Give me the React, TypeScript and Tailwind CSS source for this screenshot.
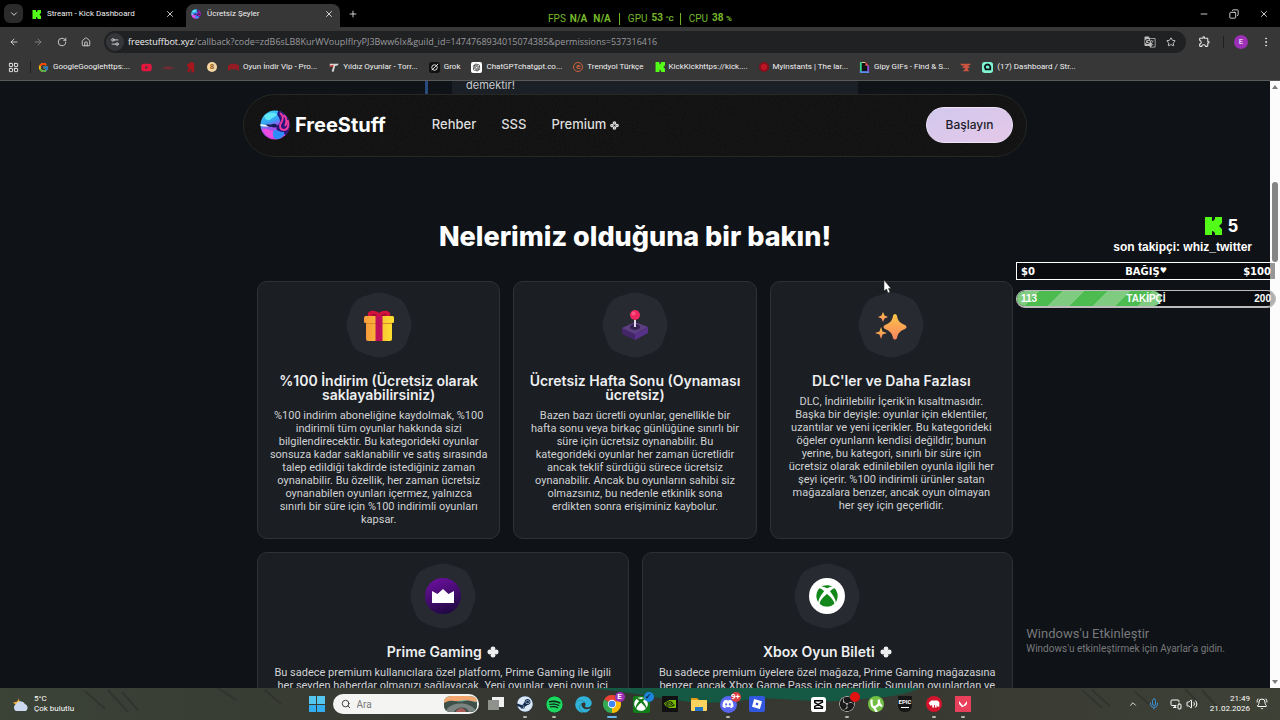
import type { ReactNode } from 'react'
import {
  ArrowLeft,
  ArrowRight,
  BellRing,
  ChevronDown,
  ChevronUp,
  Copy,
  EllipsisVertical,
  House,
  LayoutGrid,
  Mic,
  Minus,
  MonitorSmartphone,
  Plus,
  RotateCw,
  Search,
  Settings2,
  Star,
  Volume2,
  X,
} from 'lucide-react'
import { FaDiscord, FaEdge, FaSpotify, FaSteam, FaXbox, FaYoutube } from 'react-icons/fa'
import { FcGoogle } from 'react-icons/fc'
import { MdGTranslate, MdOutlineExtension } from 'react-icons/md'
import { RiOpenaiFill } from 'react-icons/ri'
import { SiNvidia, SiObsstudio, SiRoblox } from 'react-icons/si'

const site = "font-[Inter,'Open_Sans',sans-serif]"
const body = "font-[Roboto,'Open_Sans',sans-serif]"
const system = "font-[Roboto,'Noto_Sans',sans-serif]"
const arial = "font-['Liberation_Sans',Arial,sans-serif]"

function KickIcon({ className }: { className?: string }) {
  return (
    <svg viewBox="0 0 18 18" className={className} aria-hidden="true">
      <path
        fill="#53fc18"
        d="M1 0h7v4h1l2-2V0h7v6l-3 3 3 3v6h-7v-2l-2-2H8v4H1z"
      />
    </svg>
  )
}

function FreeStuffLogo({ className }: { className?: string }) {
  return (
    <svg viewBox="0 0 30 30" className={className} aria-hidden="true">
      <defs>
        <clipPath id="orb">
          <circle cx="15" cy="15" r="14.5" />
        </clipPath>
        <linearGradient id="orb-fill" x1="0" y1="0" x2="0.4" y2="1">
          <stop offset="0" stopColor="#3fe0f7" />
          <stop offset="0.45" stopColor="#35a3f5" />
          <stop offset="0.6" stopColor="#8d5cf0" />
          <stop offset="1" stopColor="#e23be0" />
        </linearGradient>
      </defs>
      <g clipPath="url(#orb)">
        <rect width="30" height="30" fill="url(#orb-fill)" />
        <path d="M4 6c4-4 9-4 13-2-1 3-4 3-6 5s-5 2-7-3z" fill="#62e9f7" />
        <path d="M18 0h8l4 7v14l-4 5c-2-3-5-4-8-5-3-2-1-5 1-7s1-5-1-8 1-4 0-6z" fill="#25157c" />
        <path
          d="M20 3c4 3 3 7 1 10s-1 7 3 7 5-5 4-10M24 5c3 3 3 8 1 11"
          fill="none"
          stroke="#ee3a9d"
          strokeWidth="2"
        />
        <path d="M5 15c3-1 6 0 8-1s4 1 5 2-4 2-6 1-4 1-7-1z" fill="#141c56" />
        <path d="M0 14l6 1 3 2-9-1z" fill="#f2faff" />
        <path d="M2 19c6-1 7 2 11 2s4 5 1 6-9-1-12-8z" fill="#ef4cdf" />
        <path d="M14 20c4 0 6 2 9 2s1 5-4 7-8-5-5-9z" fill="#2f8bf6" />
      </g>
    </svg>
  )
}

function Clover({ className }: { className?: string }) {
  return (
    <svg viewBox="0 0 12 12" className={className} fill="currentColor" aria-hidden="true">
      <circle cx="6" cy="2.8" r="2.4" />
      <circle cx="6" cy="9.2" r="2.4" />
      <circle cx="2.8" cy="6" r="2.4" />
      <circle cx="9.2" cy="6" r="2.4" />
      <rect x="4.5" y="4.5" width="3" height="3" />
    </svg>
  )
}

function OpenClover({ className }: { className?: string }) {
  return (
    <svg viewBox="0 0 12 12" className={className} fill="none" stroke="currentColor" strokeWidth="1.8" aria-hidden="true">
      <circle cx="6" cy="2.6" r="1.500" />
      <circle cx="6" cy="9.4" r="1.500" />
      <circle cx="2.6" cy="6" r="1.500" />
      <circle cx="9.4" cy="6" r="1.500" />
    </svg>
  )
}

function GiftIcon() {
  return (
    <svg viewBox="0 0 32 34" className="h-[34px] w-8" aria-hidden="true">
      <defs>
        <linearGradient id="gift" x1="0" x2="1">
          <stop offset="0" stopColor="#f79a3c" />
          <stop offset="1" stopColor="#fde02f" />
        </linearGradient>
      </defs>
      <path d="M5 8c-2-5 6-7 11-3 5-4 13-2 11 3z" fill="#d1123c" />
      <path d="M8 7c2-2 5-1 6 1zm16 0c-2-2-5-1-6 1z" fill="#8f0b2e" />
      <rect x="3" y="13" width="26" height="20" rx="2" fill="url(#gift)" />
      <rect x="1" y="8" width="30" height="7" rx="1.5" fill="url(#gift)" />
      <path d="M3 15h26v1H3z" fill="#d98a2c" />
      <rect x="12.500" y="8" width="7" height="25" fill="#c0105c" />
    </svg>
  )
}

function JoystickIcon() {
  return (
    <svg viewBox="0 0 32 34" className="h-[34px] w-8" aria-hidden="true">
      <path d="M3 20l13-6 13 5v6l-13 7-13-6z" fill="#432668" />
      <path d="M3 20l13-6 13 5-13 7z" fill="#5c3f7e" />
      <path d="M16 26l13-7v6l-13 7z" fill="#573087" />
      <ellipse cx="16" cy="19" rx="5" ry="3" fill="#33214f" />
      <rect x="15" y="12" width="2" height="7" fill="#e5d8ee" />
      <circle cx="16" cy="7" r="5" fill="#f0285f" />
      <circle cx="14.500" cy="5.500" r="2" fill="#fb5480" />
    </svg>
  )
}

function SparklesIcon() {
  return (
    <svg viewBox="0 0 32 34" className="h-[34px] w-8" aria-hidden="true">
      <defs>
        <linearGradient id="spark" x1="0" y1="0" x2="0" y2="1">
          <stop offset="0" stopColor="#fbc646" />
          <stop offset="1" stopColor="#f98461" />
        </linearGradient>
      </defs>
      <g fill="url(#spark)">
        <path d="M20 6c1 0 2 1 2 2 1 5 3 7 8 9 2 1 2 3 0 4-5 2-7 4-8 9-1 2-3 2-4 0-1-5-3-7-8-9-2-1-2-3 0-4 5-2 7-4 8-9 0-1 1-2 2-2z" />
        <path d="M8 4l1.500 3.500L13 9l-3.500 1.500L8 14l-1.500-3.500L3 9l3.500-1.500z" />
        <path d="M6 19l1.500 4.500L12 25l-4.500 1.500L6 31l-1.500-4.500L0 25l4.500-1.500z" />
      </g>
    </svg>
  )
}

function CrownIcon() {
  return (
    <svg viewBox="0 0 36 36" className="size-9" aria-hidden="true">
      <defs>
        <linearGradient id="crown" x1="0.3" y1="0" x2="0.7" y2="1">
          <stop offset="0" stopColor="#6a0f9c" />
          <stop offset="1" stopColor="#1d0840" />
        </linearGradient>
      </defs>
      <circle cx="18" cy="18" r="18" fill="url(#crown)" />
      <path d="M7 13l5.500 3L18 11l5.500 5 5.500-3v12H7z" fill="#fff" />
    </svg>
  )
}

function XboxIcon() {
  return (
    <span className="flex size-9 items-center justify-center rounded-full bg-white">
      <FaXbox className="size-[22px] text-[#13881a]" />
    </span>
  )
}

function Blob({ children }: { children: ReactNode }) {
  return (
    <div className="relative flex size-[66px] items-center justify-center">
      <svg viewBox="0 0 66 66" className="absolute inset-0 size-full" aria-hidden="true">
        <path
          d="M33 21l9 3 3 9-3 9-9 3-9-3-3-9 3-9z"
          fill="#272a30"
          stroke="#272a30"
          strokeWidth="41"
          strokeLinejoin="round"
        />
      </svg>
      <span className="relative">{children}</span>
    </div>
  )
}

type Feature = { icon: ReactNode; title: string[]; text: string[]; premium?: boolean }

const features: Feature[] = [
  {
    icon: <GiftIcon />,
    title: ['%100 İndirim (Ücretsiz olarak', 'saklayabilirsiniz)'],
    text: [
      '%100 indirim aboneliğine kaydolmak, %100',
      'indirimli tüm oyunlar hakkında sizi',
      'bilgilendirecektir. Bu kategorideki oyunlar',
      'sonsuza kadar saklanabilir ve satış sırasında',
      'talep edildiği takdirde istediğiniz zaman',
      'oynanabilir. Bu özellik, her zaman ücretsiz',
      'oynanabilen oyunları içermez, yalnızca',
      'sınırlı bir süre için %100 indirimli oyunları',
      'kapsar.',
    ],
  },
  {
    icon: <JoystickIcon />,
    title: ['Ücretsiz Hafta Sonu (Oynaması', 'ücretsiz)'],
    text: [
      'Bazen bazı ücretli oyunlar, genellikle bir',
      'hafta sonu veya birkaç günlüğüne sınırlı bir',
      'süre için ücretsiz oynanabilir. Bu',
      'kategorideki oyunlar her zaman ücretlidir',
      'ancak teklif sürdüğü sürece ücretsiz',
      'oynanabilir. Ancak bu oyunların sahibi siz',
      'olmazsınız, bu nedenle etkinlik sona',
      'erdikten sonra erişiminiz kaybolur.',
    ],
  },
  {
    icon: <SparklesIcon />,
    title: ["DLC'ler ve Daha Fazlası"],
    text: [
      "DLC, İndirilebilir İçerik'in kısaltmasıdır.",
      'Başka bir deyişle: oyunlar için eklentiler,',
      'uzantılar ve yeni içerikler. Bu kategorideki',
      'öğeler oyunların kendisi değildir; bunun',
      'yerine, bu kategori, sınırlı bir süre için',
      'ücretsiz olarak edinilebilen oyunla ilgili her',
      'şeyi içerir. %100 indirimli ürünler satan',
      'mağazalara benzer, ancak oyun olmayan',
      'her şey için geçerlidir.',
    ],
  },
]

const premiumFeatures: Feature[] = [
  {
    icon: <CrownIcon />,
    title: ['Prime Gaming'],
    premium: true,
    text: [
      'Bu sadece premium kullanıcılara özel platform, Prime Gaming ile ilgili',
      'her şeyden haberdar olmanızı sağlayacak. Yeni oyunlar, yeni oyun içi',
    ],
  },
  {
    icon: <XboxIcon />,
    title: ['Xbox Oyun Bileti'],
    premium: true,
    text: [
      'Bu sadece premium üyelere özel mağaza, Prime Gaming mağazasına',
      'benzer, ancak Xbox Game Pass için geçerlidir. Sunulan oyunlardan ve',
    ],
  },
]

function FeatureCard({ icon, title, text, premium }: Feature) {
  return (
    <article className="flex flex-col items-center rounded-[10px] border border-[#2e3236] bg-[#1b1e23] pt-2.5 pb-3 text-center">
      <Blob>{icon}</Blob>
      <h3 className="mt-4 text-sm leading-[14px] font-semibold whitespace-nowrap text-[#eeeff0]">
        {title.map((line) => (
          <span key={line} className="flex items-center justify-center gap-[5px]">
            {line}
            {premium && <Clover className="size-3" />}
          </span>
        ))}
      </h3>
      <p className={`mt-[7px] text-[11px] leading-[13px] whitespace-nowrap text-[#d0d2d4] ${body}`}>
        {text.map((line) => (
          <span key={line} className="block">
            {line}
          </span>
        ))}
      </p>
    </article>
  )
}

function TabStrip() {
  return (
    <div className="relative flex h-[27px] shrink-0 items-end bg-black text-[8px] text-[#f0f0f0]">
      <button aria-label="Sekme ara" className="mb-1 ml-1 flex size-[19px] items-center justify-center rounded-md bg-[#2b2b2b]">
        <ChevronDown className="size-2.5" />
      </button>
      <div className="ml-[9px] flex h-[25px] w-[143px] items-center pb-px">
        <KickIcon className="mr-1.5 size-[9px]" />
        <span className="flex-1">Stream - Kick Dashboard</span>
        <button aria-label="Sekmeyi kapat">
          <X className="size-2.5" />
        </button>
      </div>
      <div className="ml-[11px] flex h-[23px] w-[154px] items-center rounded-t-lg bg-[#373737] pr-1.5 pb-[3px] pl-[5px]">
        <FreeStuffLogo className="mr-1.5 size-2.5" />
        <span className="flex-1">Ücretsiz Şeyler</span>
        <button aria-label="Sekmeyi kapat">
          <X className="size-2.5" />
        </button>
      </div>
      <button aria-label="Yeni sekme" className="mb-2 ml-2">
        <Plus className="size-2.5" />
      </button>
      <div className="mr-[11px] mb-2 ml-auto flex gap-5">
        <button aria-label="Simge durumuna küçült">
          <Minus className="size-2.5" />
        </button>
        <button aria-label="Önceki boyut">
          <Copy className="size-2.5 -scale-x-100" />
        </button>
        <button aria-label="Kapat">
          <X className="size-2.5" />
        </button>
      </div>
      <div className="absolute top-[11px] left-1/2 flex -translate-x-1/2 items-center gap-1 text-[10px] leading-[14px] whitespace-nowrap text-[#76b82a]">
        <span>FPS</span>
        <b>N/A</b>
        <b className="ml-0.5">N/A</b>
        <span className="ml-1 h-3 w-px bg-[#76b82a]" />
        <span className="ml-1">GPU</span>
        <b>
          53 <span className="text-[8px]">°C</span>
        </b>
        <span className="ml-0.5 h-3 w-px bg-[#76b82a]" />
        <span className="ml-1">CPU</span>
        <b>
          38 <span className="text-[8px]">%</span>
        </b>
      </div>
    </div>
  )
}

function Toolbar() {
  return (
    <div className="flex h-[29px] shrink-0 items-center bg-[#373737] text-[#e3e3e3]">
      <div className="ml-[9px] flex gap-3.5">
        <button aria-label="Geri">
          <ArrowLeft className="size-2.5" />
        </button>
        <button aria-label="İleri" className="text-[#8b8b8b]">
          <ArrowRight className="size-2.5" />
        </button>
        <button aria-label="Yenile">
          <RotateCw className="size-2.5" />
        </button>
        <button aria-label="Ana sayfa">
          <House className="size-2.5" />
        </button>
      </div>
      <div className="ml-[13px] flex h-[22px] flex-1 items-center rounded-full bg-[#202123] pr-2.5 pl-0.5">
        <button aria-label="Site bilgileri" className="mr-1 flex size-[18px] items-center justify-center rounded-full bg-[#35363a]">
          <Settings2 className="size-2.5" />
        </button>
        <p className="flex-1 font-['Open_Sans','Noto_Sans',sans-serif] text-[9px] whitespace-nowrap text-[#9a9b9e]">
          <span className="text-[#f1f1f1]">freestuffbot.xyz</span>
          /callback?code=zdB6sLB8KurWVoupIfIryPJ3Bww6Ix&amp;guild_id=1474768934015074385&amp;permissions=537316416
        </p>
        <button aria-label="Bu sayfayı çevir" className="mr-2.5">
          <MdGTranslate className="size-3 text-[#bdbdbd]" />
        </button>
        <button aria-label="Yer işareti ekle">
          <Star className="size-2.5" />
        </button>
      </div>
      <button aria-label="Uzantılar" className="ml-3">
        <MdOutlineExtension className="size-[13px]" />
      </button>
      <span className="ml-3 h-3 w-px bg-[#202020]" />
      <button aria-label="Profil" className="ml-2.5 flex size-3.5 items-center justify-center rounded-full bg-[#9b2fb5] text-[8px] text-white">
        E
      </button>
      <button aria-label="Menü" className="mr-2 ml-3">
        <EllipsisVertical className="size-3" />
      </button>
    </div>
  )
}

function Letter({ className, children }: { className: string; children?: ReactNode }) {
  return (
    <span className={`flex size-2.5 items-center justify-center text-[8px] leading-none font-bold ${className}`}>
      {children}
    </span>
  )
}

const bookmarks: { icon: ReactNode; name: string; label?: string }[] = [
  { icon: <FcGoogle className="size-[11px]" />, name: 'Google', label: 'GoogleGooglehttps:...' },
  { icon: <FaYoutube className="size-[11px] text-[#e3173d]" />, name: 'YouTube' },
  {
    icon: (
      <svg viewBox="0 0 12 10" className="size-[11px]" fill="none" stroke="#8f2630" aria-hidden="true">
        <path d="M0 6h2l1-2 1 3 1-3 1 3 1-3 1 3 1-2h3" />
      </svg>
    ),
    name: 'Dizi',
  },
  {
    icon: (
      <svg viewBox="0 0 10 12" className="size-[11px]" fill="#a5161d" aria-hidden="true">
        <path d="M1 3l5-3 3 1v10l-3 1V8L4 9v2L1 10l2-3z" />
      </svg>
    ),
    name: 'Film',
  },
  { icon: <Letter className="rounded-full bg-[#f3d6a2] text-[#9b5d1d]">8</Letter>, name: 'Sekiz' },
  {
    icon: (
      <svg viewBox="0 0 12 10" className="size-[11px]" fill="#951c22" aria-hidden="true">
        <path d="M0 9V3l3-2h6l3 2v6l-3-2H3z" />
      </svg>
    ),
    name: 'Oyun İndir',
    label: 'Oyun İndir Vip - Pro...',
  },
  {
    icon: (
      <svg viewBox="0 0 12 12" className="size-[11px]" aria-hidden="true">
        <path d="M2 2h10l-2 2H8l-2 7-2-1 2-6-4 1z" fill="#d9d9d9" />
        <path d="M1 4l5-1-1 3z" fill="#c9362f" />
      </svg>
    ),
    name: 'Yıldız Oyunlar',
    label: 'Yıldız Oyunlar - Torr...',
  },
  {
    icon: (
      <svg viewBox="0 0 12 12" className="size-[11px]" fill="none" stroke="#eee" aria-hidden="true">
        <rect width="12" height="12" rx="3" fill="#101010" stroke="none" />
        <circle cx="6" cy="6" r="3" />
        <path d="M3 9l7-7" />
      </svg>
    ),
    name: 'Grok',
    label: 'Grok',
  },
  {
    icon: (
      <span className="flex size-[11px] items-center justify-center rounded-xs bg-white text-black">
        <RiOpenaiFill className="size-[9px]" />
      </span>
    ),
    name: 'ChatGPT',
    label: 'ChatGPTchatgpt.co...',
  },
  {
    icon: <Letter className="rounded-full border border-[#d1623b] text-[#d1623b]">e</Letter>,
    name: 'Trendyol',
    label: 'Trendyol Türkçe',
  },
  { icon: <KickIcon className="size-2.5" />, name: 'Kick', label: 'KickKickhttps://kick....' },
  {
    icon: <Letter className="rounded-full border-2 border-[#86101c] bg-[#c01525]" />,
    name: 'Myinstants',
    label: 'Myinstants | The lar...',
  },
  {
    icon: (
      <svg viewBox="0 0 10 12" className="size-[11px]" aria-hidden="true">
        <path d="M1 0h5l3 3v9H1z" fill="#111" />
        <path d="M0 0h2v12H0z" fill="#35d08a" />
        <path d="M0 10h10v2H0z" fill="#5b8df0" />
        <path d="M2 0h4v1H2z" fill="#eee48a" />
        <path d="M6 0l4 4H6z" fill="#f0555d" />
        <path d="M8 4h2v6H8z" fill="#8a4ee0" />
      </svg>
    ),
    name: 'Gipy',
    label: 'Gipy GIFs - Find & S...',
  },
  {
    icon: (
      <svg viewBox="0 0 12 10" className="size-[11px]" fill="#cf5540" aria-hidden="true">
        <path d="M0 1h12l-2 2H8l3 2-3 1 2 3H3l3-3-4-1 3-2H2z" />
      </svg>
    ),
    name: 'Oyun',
  },
  {
    icon: (
      <svg viewBox="0 0 12 12" className="size-[11px]" aria-hidden="true">
        <rect width="12" height="12" rx="3" fill="#80f5d2" />
        <path d="M3 5c1-3 5-3 6 0v3H4z" fill="none" stroke="#09161d" strokeWidth="2" />
      </svg>
    ),
    name: 'Streamlabs',
    label: '(17) Dashboard / Str...',
  },
]

function BookmarksBar() {
  return (
    <nav aria-label="Yer işaretleri" className="flex h-[25px] shrink-0 items-center gap-[11px] border-b border-[#5a5a5a] bg-[#373737] pb-0.5 pl-2 text-[8px] whitespace-nowrap text-[#f0f0f0]">
      <button aria-label="Uygulamalar">
        <LayoutGrid className="size-[11px]" />
      </button>
      <span className="-mr-1 h-3 w-px bg-[#202020]" />
      {bookmarks.map(({ icon, name, label }) => (
        <a key={name} href="#" aria-label={name} className="flex items-center gap-1">
          {icon}
          {label}
        </a>
      ))}
    </nav>
  )
}

function SiteNav() {
  return (
    <header className="relative mx-auto flex h-[63px] w-full max-w-[784px] items-center overflow-hidden rounded-full border border-[#262824] bg-[#0f100f] pr-[13px] pb-px pl-4 text-white">
      <svg className="absolute inset-0 size-full opacity-5" aria-hidden="true">
        <filter id="grain">
          <feTurbulence type="fractalNoise" baseFrequency="0.6" numOctaves="2" />
          <feColorMatrix type="saturate" values="0" />
        </filter>
        <rect width="100%" height="100%" filter="url(#grain)" />
      </svg>
      <a href="#" className="relative flex items-center gap-[5px] text-[20px] font-bold">
        <FreeStuffLogo className="size-[30px]" />
        FreeStuff
      </a>
      <nav className="relative ml-[46px] flex items-center gap-[25px] text-[13px] font-medium text-[#dedede]">
        <a href="#rehber">Rehber</a>
        <a href="#sss">SSS</a>
        <a href="#premium" className="flex items-center gap-1">
          Premium <OpenClover className="size-[9px]" />
        </a>
      </nav>
      <button className="relative ml-auto h-9 w-[87px] rounded-full border border-[#f0e2fa] bg-linear-to-br from-[#d2c8ee] to-[#e4c8e8] text-xs font-medium text-[#211c29]">
        Başlayın
      </button>
    </header>
  )
}

function StreamOverlay() {
  return (
    <aside className={`absolute top-[216px] right-1 w-[260px] font-bold text-white ${arial}`}>
      <p className="flex items-center justify-end gap-1.5 pr-[38px] text-[18px] leading-5">
        <KickIcon className="size-[18px]" />5
      </p>
      <p className="mt-1 pr-6 text-right text-xs leading-[14px]">son takipçi: whiz_twitter</p>
      <div className="mt-2 grid h-[18px] grid-cols-[1fr_auto_1fr] items-center border border-white bg-black/40 px-1 font-['DejaVu_Sans',Verdana,sans-serif] text-[10px]">
        <span>$0</span>
        <span className="flex items-center">
          BAĞIŞ<span className="text-[8px]">♥</span>
        </span>
        <span className="text-right">$100</span>
      </div>
      <div className="relative mt-2.5 grid h-[18px] grid-cols-[1fr_auto_1fr] items-center overflow-hidden rounded-full border border-b-2 border-[#bcbcbc] bg-black/30 px-1 text-[10px]">
        <span className="absolute inset-y-0 left-0 w-[56%] rounded-r-full bg-[repeating-linear-gradient(135deg,#7fcb80_0_16px,#4cbb50_16px_32px)]" />
        <span className="relative">113</span>
        <span className="relative">TAKİPÇİ</span>
        <span className="relative text-right">200</span>
      </div>
    </aside>
  )
}

function Scrollbar() {
  return (
    <div className="flex w-2.5 shrink-0 flex-col items-center justify-between bg-[#fcfcfc] py-1">
      <svg viewBox="0 0 6 4" className="h-1 w-1.5" fill="#7b7b7b" aria-hidden="true">
        <path d="M3 0l3 4H0z" />
      </svg>
      <span className="mb-[325px] h-20 w-1.5 rounded-full bg-[#858585]" />
      <svg viewBox="0 0 6 4" className="h-1 w-1.5" fill="#7b7b7b" aria-hidden="true">
        <path d="M0 0h6L3 4z" />
      </svg>
    </div>
  )
}

function ChromeLogo() {
  return (
    <svg viewBox="0 0 18 18" className="size-[18px]" aria-hidden="true">
      <path d="M9 9L1.200 4.500A9 9 0 0116.800 4.500z" fill="#e94335" />
      <path d="M9 9V18A9 9 0 011.200 4.500z" fill="#34a853" />
      <path d="M9 9l7.800-4.500A9 9 0 019 18z" fill="#fbbc05" />
      <circle cx="9" cy="9" r="4.200" fill="#fff" />
      <circle cx="9" cy="9" r="3.300" fill="#4285f4" />
    </svg>
  )
}

const apps: { name: string; icon: ReactNode; badge?: ReactNode; open?: boolean; active?: boolean }[] = [
  {
    name: 'Görev Görünümü',
    icon: (
      <svg viewBox="0 0 18 16" className="h-4 w-[18px]" aria-hidden="true">
        <rect x="5" y="1" width="12" height="10" fill="#f0f0f0" />
        <rect x="1" y="4" width="11" height="10" fill="#8f918c" />
      </svg>
    ),
  },
  {
    name: 'Steam',
    open: true,
    icon: (
      <span className="rounded-full bg-[#122c50]">
        <FaSteam className="size-4 text-[#dbe8f5]" />
      </span>
    ),
  },
  { name: 'Spotify', open: true, icon: <FaSpotify className="size-[17px] rounded-full bg-[#10261a] text-[#1ed760]" /> },
  { name: 'Edge', icon: <FaEdge className="size-[17px] text-[#2fb3d8]" /> },
  {
    name: 'Chrome',
    active: true,
    icon: <ChromeLogo />,
    badge: <Letter className="rounded-full bg-[#9b2fb5] text-white">E</Letter>,
  },
  {
    name: 'Xbox',
    icon: (
      <span className="flex size-[17px] items-center justify-center rounded-xs bg-[#117d18]">
        <FaXbox className="size-3.5 text-white" />
      </span>
    ),
    badge: <Letter className="rounded-full bg-[#1c87dc] text-[#07233d]">✓</Letter>,
  },
  {
    name: 'NVIDIA',
    icon: (
      <span className="flex size-4 items-center justify-center bg-[#111]">
        <SiNvidia className="size-3 text-[#76b900]" />
      </span>
    ),
  },
  {
    name: 'Dosya Gezgini',
    icon: (
      <svg viewBox="0 0 18 16" className="h-4 w-[18px]" aria-hidden="true">
        <path d="M1 2h6l2 2h8v4H1z" fill="#e39b1b" />
        <rect x="1" y="4" width="16" height="11" rx="1" fill="#fbd35e" />
        <path d="M5 15v-4h8v4z" fill="#2474c4" />
      </svg>
    ),
  },
  {
    name: 'Discord',
    open: true,
    icon: (
      <span className="flex size-[17px] items-center justify-center rounded-full bg-[#5865f2]">
        <FaDiscord className="size-3 text-white" />
      </span>
    ),
    badge: <Letter className="rounded-full bg-[#dc3e43] text-white">9+</Letter>,
  },
  {
    name: 'Roblox',
    icon: (
      <span className="flex size-4 items-center justify-center rounded-xs bg-[#3358e0]">
        <SiRoblox className="size-2.5 text-white" />
      </span>
    ),
  },
  { name: '', icon: null },
  {
    name: 'CapCut',
    icon: (
      <svg viewBox="0 0 16 16" className="size-[15px]" aria-hidden="true">
        <rect width="16" height="16" rx="3" fill="#fff" />
        <path d="M12 6V4H4v2l9 5M12 10v2H4v-2l9-5" fill="none" stroke="#000" strokeWidth="1.500" />
      </svg>
    ),
  },
  {
    name: 'OBS Studio',
    open: true,
    icon: <SiObsstudio className="size-4 rounded-full bg-[#1a1a1a] text-[#d8d8d8]" />,
    badge: <Letter className="rounded-full bg-[#e01212]" />,
  },
  {
    name: 'uTorrent',
    icon: (
      <svg viewBox="0 0 18 18" className="size-4" aria-hidden="true">
        <circle cx="9" cy="9" r="9" fill="#72bf44" />
        <path d="M4 4v4c0 4 2 5 5 4s4-3 3-8m0 0c1 5 1 7 4 7M6 12l4 6" fill="none" stroke="#fff" strokeWidth="2.500" />
      </svg>
    ),
  },
  {
    name: 'Epic Games',
    icon: (
      <span className="flex h-4 w-3.5 flex-col items-center rounded-b-md bg-[#171717] pt-0.5 text-[6px] leading-[7px] font-bold text-white">
        <span>EPIC</span>
        <span className="mt-0.5 h-px w-2 bg-white" />
      </span>
    ),
  },
  {
    name: 'Riot Client',
    open: true,
    icon: (
      <svg viewBox="0 0 18 18" className="size-4" aria-hidden="true">
        <circle cx="9" cy="9" r="9" fill="#d4142c" />
        <path d="M3 8l3-3h7l2 2v5h-2l-1-2v3h-2v-3H9v3H7v-3L5 11z" fill="#fff" />
      </svg>
    ),
  },
  {
    name: 'VALORANT',
    open: true,
    icon: (
      <svg viewBox="0 0 16 16" className="size-4" aria-hidden="true">
        <rect width="16" height="16" fill="#e8405a" />
        <path d="M4 5l5 6H7L4 8zm8 0v3l-2 2H8z" fill="#fff" />
      </svg>
    ),
  },
]

function Taskbar() {
  return (
    <footer className="relative flex h-8 shrink-0 items-center bg-linear-to-r from-[#3b4236] via-[#34352f] to-[#3e4136] text-[8px] text-white">
      <svg viewBox="0 0 1280 32" preserveAspectRatio="none" className="absolute inset-0 size-full" aria-hidden="true">
        <path d="M590 0h330c-18 9-45 10-70 12-40 5-75-6-110 1-55 6-75-5-150-13z" fill="#155844" />
        <g stroke="#292c27" strokeWidth="2" opacity="0.5">
          <path d="M85 3l20 18M108 2l20 22M122 4l16 18M218 0l18 12M265 2l16 14M1082 2l20 18M1092 2l18 16M1135 4l14 12M1185 1l14 14M1202 2l16 18" />
        </g>
      </svg>
      <div className="relative flex flex-1 items-center gap-1 pl-3">
        <svg viewBox="0 0 18 16" className="h-4 w-[18px]" aria-hidden="true">
          <path d="M7 0c-1 4 1 7 5 7-2 4-9 3-11-1 4 1 6-2 6-6z" fill="#f5b13d" />
          <path d="M4 15a4 4 0 010-7 5 5 0 019 0 4 4 0 011 7z" fill="#cbd8f0" />
        </svg>
        <p className="leading-[10px]">
          5°C
          <br />
          Çok bulutlu
        </p>
      </div>
      <div className="relative ml-1.5 flex h-full items-center">
        <button aria-label="Başlat" className="mr-2 grid size-4 grid-cols-2 gap-px">
          <span className="bg-[#54c6f0]" />
          <span className="bg-[#54c6f0]" />
          <span className="bg-[#33aef0]" />
          <span className="bg-[#33aef0]" />
        </button>
        <label className="flex h-5 w-[146px] items-center gap-1.5 rounded-full bg-[#f4f4f2] pr-px pl-2 text-[#222]">
          <Search className="size-2.5 shrink-0" />
          <input aria-label="Ara" placeholder="Ara" className="w-20 min-w-0 flex-1 text-[10px] outline-none placeholder:text-[#777]" />
          <svg viewBox="0 0 34 18" className="h-[18px] w-[34px] shrink-0" aria-hidden="true">
            <clipPath id="scene">
              <rect y="1" width="33" height="16" rx="6" />
            </clipPath>
            <g clipPath="url(#scene)">
              <rect width="34" height="18" fill="#6eb0a4" />
              <path d="M0 3c9-4 25-3 34 0v4L20 5 0 8z" fill="#f3a66d" />
              <path d="M0 8c8-5 14 0 20-2s9 2 14 1v11H0z" fill="#3f5049" />
              <path d="M2 16c4-10 25-10 30 0l-7 1c-2-6-12-6-16 1z" fill="#7c8482" />
              <path d="M12 17c1-5 9-5 10 0z" fill="#a85b58" />
            </g>
          </svg>
        </label>
        <div className="ml-[3px] flex h-full items-center">
          {apps.map(({ name, icon, badge, open, active }) =>
            name ? (
              <button key={name} aria-label={name} className="relative flex h-full w-[29px] items-center justify-center">
                {icon}
                {badge && <span className="absolute top-1 right-0.5">{badge}</span>}
                {open && <span className="absolute bottom-0.5 h-0.5 w-1 rounded-full bg-[#b5b8a8]" />}
                {active && <span className="absolute bottom-0.5 h-0.5 w-2.5 rounded-full bg-[#64b6ec]" />}
              </button>
            ) : (
              <span key="gap" className="w-8" />
            ),
          )}
        </div>
      </div>
      <div className="relative flex flex-1 items-center justify-end pr-3">
        <ChevronUp className="mr-2.5 size-2.5" />
        <Mic className="mr-2.5 size-3 text-[#3c91d4]" />
        <MonitorSmartphone className="mr-1 size-3" />
        <Volume2 className="mr-3 size-3" />
        <p className="mr-1.5 text-right leading-[10px]">
          21:49
          <br />
          21.02.2026
        </p>
        <BellRing className="size-3" />
      </div>
    </footer>
  )
}

export default function App() {
  return (
    <div className={`relative flex h-screen flex-col overflow-hidden bg-black ${system}`}>
      <TabStrip />
      <Toolbar />
      <BookmarksBar />
      <div className="flex min-h-0 flex-1">
        <main className={`min-w-0 flex-1 overflow-hidden bg-[#0f1216] ${site}`}>
          <div className="mx-auto flex h-[13px] w-full max-w-[446px] overflow-hidden">
            <span className="mr-6 ml-[13px] w-[3px] bg-[#294a7d]" />
            <p className="flex-1 bg-[#1b2026] pl-3.5 text-[11px] leading-[8px] text-[#c9cbcd]">demektir!</p>
          </div>
          <SiteNav />
          <section className="mx-auto w-full max-w-[756px]">
            <h2 className="mt-16 text-center text-[27px] leading-8 font-extrabold text-white">
              Nelerimiz olduğuna bir bakın!
            </h2>
            <div className="mt-7 grid grid-cols-3 gap-[13px]">
              {features.map((feature) => (
                <FeatureCard key={feature.title[0]} {...feature} />
              ))}
            </div>
            <div className="mt-[13px] grid grid-cols-2 gap-[13px]">
              {premiumFeatures.map((feature) => (
                <FeatureCard key={feature.title[0]} {...feature} />
              ))}
            </div>
          </section>
        </main>
        <Scrollbar />
      </div>
      <Taskbar />

      <StreamOverlay />
      <div className="absolute right-[55px] bottom-16 text-[#77797c]">
        <p className="text-[13px] leading-4">Windows'u Etkinleştir</p>
        <p className="text-[10px] leading-[14px]">Windows'u etkinleştirmek için Ayarlar'a gidin.</p>
      </div>
      <svg viewBox="0 0 8 13" className="absolute top-[280px] left-[883px] h-[13px] w-2" aria-hidden="true">
        <path d="M1 0v11l2.500-2L5 13l2-1-1.500-3.500H8z" fill="#fff" stroke="#222" strokeWidth="0.500" />
      </svg>
    </div>
  )
}
